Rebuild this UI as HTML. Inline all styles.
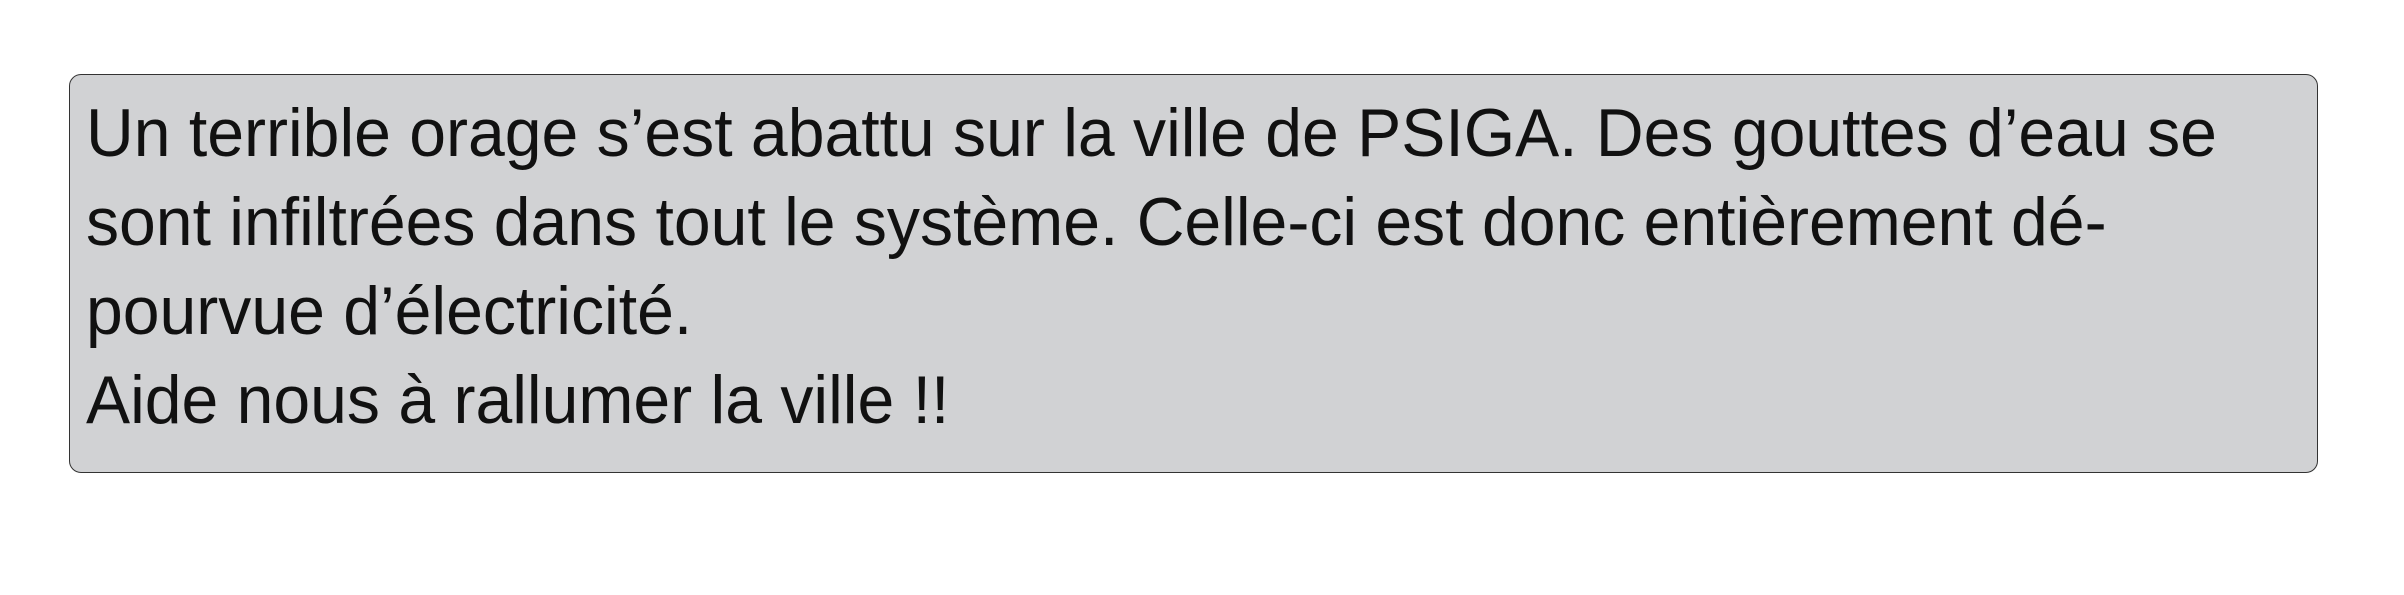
<!DOCTYPE html>
<html><head><meta charset="utf-8"><style>
html,body{margin:0;padding:0;background:#fff;width:2404px;height:595px;overflow:hidden}
.box{position:absolute;left:69px;top:74px;width:2259px;height:399px;background:#d1d2d4;border:1.5px solid #333;border-radius:12px;box-sizing:border-box}
.t{position:absolute;left:86px;top:89px;font-family:"Liberation Sans",sans-serif;font-size:68px;line-height:89px;color:#111;transform-origin:0 0;transform:scaleX(0.972);white-space:nowrap}
</style></head><body>
<div class="box" style="width:2249px"></div>
<div class="t">Un terrible orage s’est abattu sur la ville de PSIGA. Des gouttes d’eau se<br>sont infiltrées dans tout le système. Celle-ci est donc entièrement dé-<br>pourvue d’électricité.<br>Aide nous à rallumer la ville !!</div>
</body></html>
